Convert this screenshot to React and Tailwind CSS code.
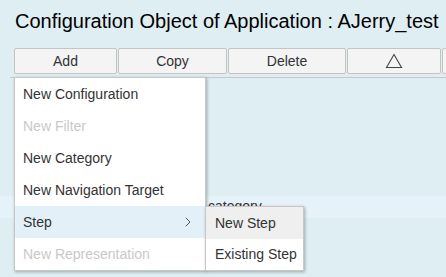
export default function App() {
  const font = { fontFamily: '"Liberation Sans", Arial, sans-serif' };
  const items = [
    { t: "New Configuration" },
    { t: "New Filter", d: true },
    { t: "New Category" },
    { t: "New Navigation Target" },
    { t: "Step", sub: true },
    { t: "New Representation", d: true },
  ];
  return (
    <div
      className="relative w-[446px] h-[277px] overflow-hidden bg-[#deeef3] text-[#333]"
      style={font}
    >
      <div className="pl-[15px] pt-[8px] h-[48px] text-[20px] leading-[26px] text-[#000] whitespace-nowrap">
        Configuration Object of Application : AJerry_test
      </div>
      <div className="flex gap-[1px] pl-[14px] h-[26px]">
        {[
          ["Add", "w-[103px]"],
          ["Copy", "w-[109px]"],
          ["Delete", "w-[118px]"],
        ].map(([t, w]) => (
          <div
            key={t}
            className={`${w} shrink-0 flex items-center justify-center border border-[#c4c4c4] rounded-[2px] bg-[#f4f4f4] text-[14px]`}
          >
            {t}
          </div>
        ))}
        <div className="w-[94px] shrink-0 flex items-center justify-center border border-[#c4c4c4] rounded-[2px] bg-[#f4f4f4]">
          <svg width="18" height="16" viewBox="0 0 18 16">
            <path d="M9 1.5 L16.5 14.5 L1.5 14.5 Z" fill="none" stroke="#444" strokeWidth="1.1" />
          </svg>
        </div>
        <div className="w-[20px] shrink-0 border border-[#c4c4c4] rounded-[2px] bg-[#f4f4f4]" />
      </div>
      <div className="ml-[10px] mt-[3px] h-[1px] bg-[#c8c8c8]" />
      <div className="mt-[118px] h-[22px] bg-[#e6f2f9] pl-[208px] text-[14px] leading-[20px] overflow-hidden">
        category
      </div>

      <div className="absolute left-[14px] top-[77px] w-[192px] bg-white border border-[#c8c8c8] shadow-[1px_1px_3px_rgba(0,0,0,0.3)]">
        {items.map((it) => (
          <div
            key={it.t}
            className={`h-[32px] flex items-center pl-[8px] pr-[14px] text-[14px] ${
              it.d ? "text-[#c9c9c9]" : "text-[#333]"
            } ${it.sub ? "bg-[#e3f0f8]" : ""}`}
          >
            <span className="flex-1">{it.t}</span>
            {it.sub && (
              <svg width="6" height="10" viewBox="0 0 6 10">
                <path d="M0.8 0.8 L5 5 L0.8 9.2" fill="none" stroke="#555" strokeWidth="1" />
              </svg>
            )}
          </div>
        ))}
      </div>

      <div className="absolute left-[205px] top-[206px] w-[99px] bg-white border border-[#c8c8c8] shadow-[1px_1px_3px_rgba(0,0,0,0.3)]">
        <div className="h-[32px] flex items-center pl-[9px] text-[14px] bg-[#efefef]">New Step</div>
        <div className="h-[31px] flex items-center pl-[9px] text-[14px]">Existing Step</div>
      </div>
    </div>
  );
}
